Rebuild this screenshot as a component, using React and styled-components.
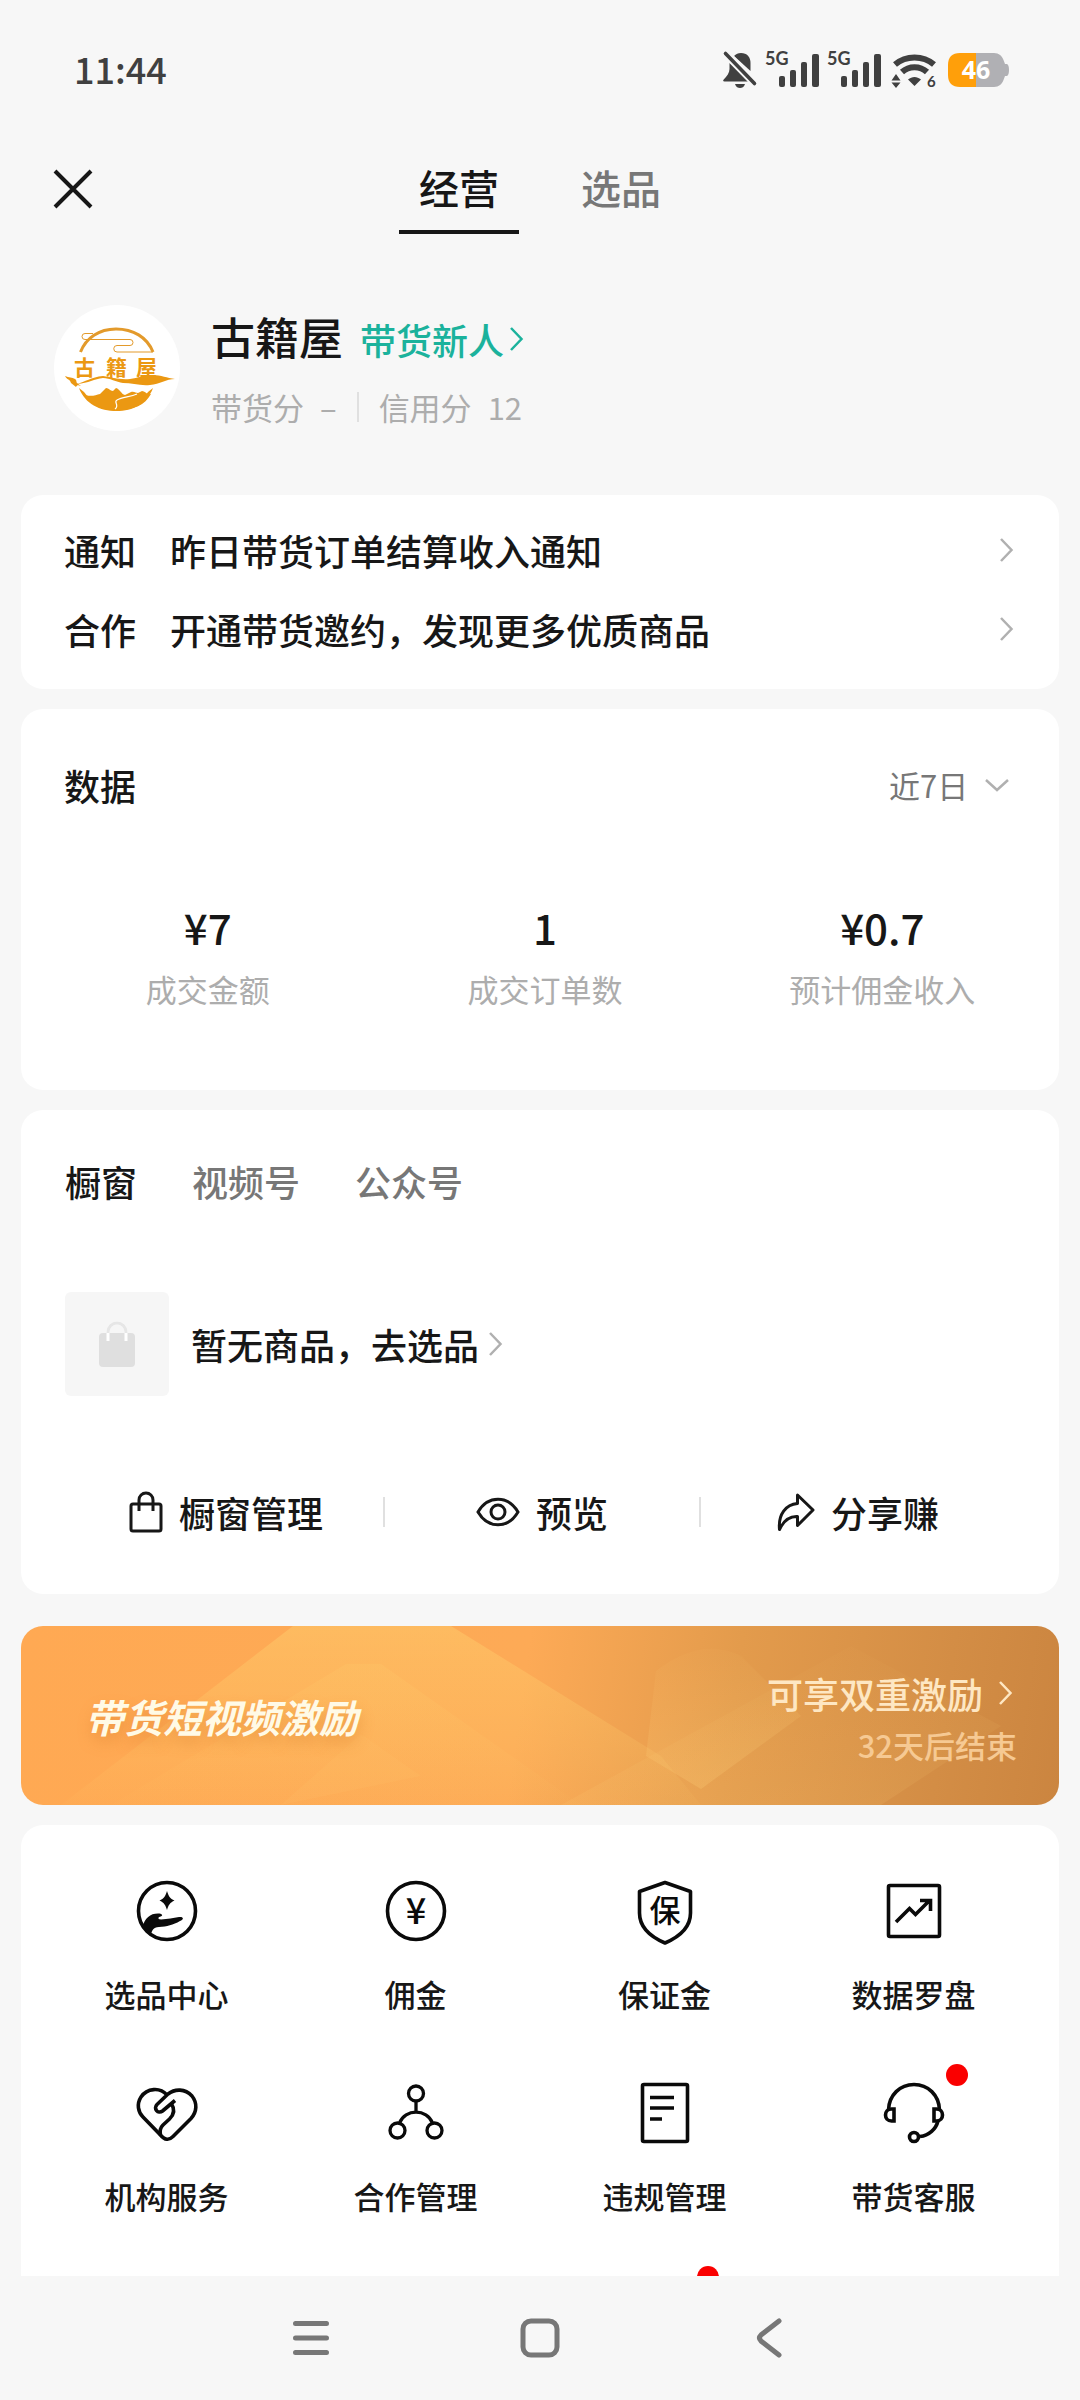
import React, { useState } from "react";
import styled, { createGlobalStyle } from "styled-components";

const ink = "#171717";
const grey = "#777777";
const pale = "#adadad";

const GlobalStyle = createGlobalStyle`
  *, *::before, *::after { box-sizing: border-box; }
  body {
    margin: 0;
    background: #f7f7f7;
    color: ${ink};
    font-family: "Noto Sans CJK SC", "Noto Sans", sans-serif;
  }
  button, select {
    margin: 0;
    padding: 0;
    border: 0;
    background: none;
    color: inherit;
    font: inherit;
    cursor: pointer;
  }
  a { color: inherit; text-decoration: none; }
  svg { display: block; flex: none; overflow: visible; }
  h1, h2, p, dl, dt, dd { margin: 0; font-weight: inherit; }
`;

const Screen = styled.div`
  display: flex;
  flex-direction: column;
  height: 100vh;
`;

const StatusBar = styled.div`
  display: flex;
  flex: none;
  align-items: center;
  justify-content: space-between;
  height: 140px;
  padding: 0 71px 0 74px;
  color: #404040;
`;

const Clock = styled.time`
  padding-bottom: 4px;
  font-size: 36px;
  font-weight: 500;
  line-height: 40px;
`;

const StatusIcons = styled.div`
  display: flex;
  align-items: center;
  gap: 8px;
`;

const Header = styled.header`
  display: grid;
  flex: none;
  grid-template-columns: 1fr auto 1fr;
  align-items: center;
  height: 94px;
  padding: 4px 53px 0;
`;

const IconButton = styled.button`
  display: grid;
  place-items: center;
  width: 40px;
  height: 40px;
`;

const HeaderTabs = styled.nav`
  display: flex;
  gap: 42px;
  height: 90px;
`;

const HeaderTab = styled.button`
  width: 120px;
  border-bottom: 4px solid ${(p) => (p.$active ? ink : "transparent")};
  color: ${(p) => (p.$active ? ink : grey)};
  font-size: 40px;
  font-weight: 500;
  line-height: 60px;
`;

const Content = styled.main`
  flex: 1;
  min-height: 0;
  overflow-y: auto;
  scrollbar-width: none;
  padding: 0 21px;
`;

const Profile = styled.section`
  display: flex;
  align-items: center;
  gap: 30px;
  padding: 70px 32px 63px;
`;

const ProfileText = styled.div`
  display: flex;
  flex-direction: column;
  gap: 18px;
  padding-bottom: 4px;
`;

const NameLine = styled.div`
  display: flex;
  align-items: baseline;
  gap: 17px;
  line-height: 60px;
`;

const ShopName = styled.h1`
  font-size: 44px;
  font-weight: 500;
`;

const Level = styled.a`
  display: flex;
  align-items: center;
  gap: 6px;
  color: #1bb29c;
  font-size: 36px;
  font-weight: 500;
`;

const Scores = styled.div`
  display: flex;
  align-items: center;
  gap: 20px;
  color: ${pale};
  font-size: 31px;
  line-height: 40px;
`;

const Score = styled.span`
  display: flex;
  gap: 16px;
`;

const Divider = styled.span`
  width: 2px;
  height: 30px;
  background: #e0e0e0;
`;

const Card = styled.section`
  margin-bottom: ${(p) => p.$gap || 20}px;
  padding: ${(p) => p.$pad};
  border-radius: 22px;
  background: #ffffff;
`;

const Notice = styled.a`
  display: flex;
  align-items: center;
  gap: 34px;
  height: 79px;
  font-size: 36px;
  font-weight: 500;
  line-height: 52px;
`;

const NoticeText = styled.span`
  flex: 1;
`;

const CardHead = styled.div`
  display: flex;
  align-items: center;
  justify-content: space-between;
  height: 52px;
  padding: 0 50px 0 43px;
`;

const CardTitle = styled.h2`
  font-size: 36px;
  font-weight: 500;
  line-height: 52px;
`;

const Period = styled.label`
  display: flex;
  align-items: center;
  gap: 16px;
  color: ${grey};
  font-size: 31px;
  line-height: 40px;
`;

const PeriodSelect = styled.select`
  appearance: none;
  height: 46px;
`;

const Stats = styled.dl`
  display: grid;
  grid-template-columns: repeat(3, 1fr);
  padding: 86px 8px 0 18px;
  text-align: center;
`;

const Stat = styled.div`
  display: flex;
  flex-direction: column-reverse;
  gap: 12px;
`;

const StatLabel = styled.dt`
  color: ${pale};
  font-size: 31px;
  line-height: 40px;
`;

const StatValue = styled.dd`
  font-size: 42px;
  font-weight: 500;
  line-height: 60px;
`;

const ShopTabs = styled.div`
  display: flex;
  gap: 55px;
  font-size: 36px;
  font-weight: 500;
  line-height: 52px;
`;

const ShopTab = styled.button`
  color: ${(p) => (p.$active ? ink : grey)};
`;

const EmptyGoods = styled.a`
  display: flex;
  align-items: center;
  gap: 22px;
  margin-top: 85px;
  font-size: 36px;
  font-weight: 500;
  line-height: 52px;
`;

const Thumb = styled.span`
  display: grid;
  place-items: center;
  width: 104px;
  height: 104px;
  border-radius: 6px;
  background: #f6f6f6;
`;

const LinkText = styled.span`
  display: flex;
  align-items: center;
  gap: 10px;
`;

const Actions = styled.div`
  display: flex;
  align-items: center;
  margin-top: 90px;
  padding-left: 4px;
`;

const Action = styled.button`
  display: flex;
  flex: 1;
  align-items: center;
  justify-content: center;
  gap: 16px;
  font-size: 36px;
  font-weight: 500;
  line-height: 52px;
`;

const Banner = styled.a`
  position: relative;
  display: flex;
  align-items: center;
  justify-content: space-between;
  height: 179px;
  margin-bottom: 20px;
  padding: 0 42px 0 64px;
  overflow: hidden;
  border-radius: 22px;
  background: linear-gradient(98deg, #ffa953 0%, #fdaa56 48%, #e39b4c 68%, #d38d45 88%, #cb8540 100%);
`;

const BannerArt = styled.svg`
  position: absolute;
  inset: 0;
  width: 100%;
  height: 100%;
`;

const BannerTitle = styled.span`
  position: relative;
  color: #fffae6;
  font-size: 39px;
  font-style: italic;
  font-weight: 700;
  line-height: 52px;
  text-shadow: 0 8px 14px rgba(214, 122, 40, 0.4);
`;

const BannerSide = styled.span`
  position: relative;
  display: flex;
  flex-direction: column;
  align-items: flex-end;
  gap: 6px;
`;

const BannerOffer = styled.span`
  display: flex;
  align-items: center;
  gap: 16px;
  padding-right: 4px;
  color: #fee7c3;
  font-size: 36px;
  font-weight: 500;
  line-height: 52px;
`;

const BannerNote = styled.span`
  color: #f6c993;
  font-size: 31px;
  font-weight: 500;
  line-height: 40px;
`;

const Tools = styled.section`
  display: grid;
  grid-template-columns: repeat(4, 1fr);
  row-gap: 67px;
  padding: 54px 21px;
  border-radius: 22px 22px 0 0;
  background: #ffffff;
`;

const Tool = styled.button`
  display: flex;
  flex-direction: column;
  align-items: center;
  gap: 31px;
  min-height: 135px;
  font-size: 31px;
  font-weight: 500;
  line-height: 40px;
`;

const ToolIcon = styled.span`
  position: relative;
  width: 64px;
  height: 64px;
`;

const Dot = styled.span`
  position: absolute;
  top: -17px;
  right: -22px;
  width: 22px;
  height: 22px;
  border-radius: 50%;
  background: #fa0000;
`;

const SystemNav = styled.nav`
  display: flex;
  flex: none;
  align-items: center;
  justify-content: center;
  gap: 189px;
  height: 124px;
  background: #f7f7f7;
`;

function Chevron({ color = "#b0b0b0" }) {
  return (
    <svg width="14" height="24" viewBox="0 0 14 24" fill="none" stroke={color} strokeWidth="2.5">
      <path d="M1 1 11.500 12 1 23" />
    </svg>
  );
}

function BellOff() {
  return (
    <svg width="34" height="40" viewBox="0 0 34 40" fill="#404040">
      <path d="M11 6C13 4 15 3 18 3c6 0 9.500 4 9.500 10v8Z" />
      <path d="M6.500 13 25 31.500H1.500c-1.500 0-1.700-1-.8-2C4 26 6.500 23 6.500 19Z" />
      <path d="M12 34h10c-1 3-3 4-5 4s-4-1-5-4Z" />
      <path d="m3 3.500 29 30" stroke="#f7f7f7" strokeWidth="8" />
      <path d="m2.500 3.500 29 30" stroke="#404040" strokeWidth="3.600" strokeLinecap="round" />
    </svg>
  );
}

function Signal() {
  return (
    <svg width="54" height="46" viewBox="0 -5 54 46" fill="#404040">
      <text x="0" y="13" fontSize="18" fontWeight="700" fontFamily="Lato, sans-serif">5G</text>
      <rect x="14" y="24" width="6" height="11" rx="2" />
      <rect x="25" y="18" width="6" height="17" rx="2" />
      <rect x="36" y="10" width="6" height="25" rx="2" />
      <rect x="47" y="2" width="7" height="33" rx="2" />
    </svg>
  );
}

function Wifi() {
  return (
    <svg width="51" height="46" viewBox="0 -5 51 46" fill="none" stroke="#404040">
      <path d="M6 12.500C17 3 34 3 45 12.500" strokeWidth="6" />
      <path d="M13 20c7-6.500 18-6.500 25 0" strokeWidth="6" />
      <path d="M19 27.500c4-3.500 9-3.500 13 0L25.500 34Z" fill="#404040" stroke="none" />
      <path d="m7 22 4.500 6.500h-9ZM7 36l4.500-5.500h-9Z" fill="#404040" stroke="none" />
      <text x="38" y="35" fontSize="15" fontWeight="700" fill="#404040" stroke="none" fontFamily="Lato, sans-serif">6</text>
    </svg>
  );
}

function Battery() {
  return (
    <svg width="61" height="34" viewBox="0 0 61 34">
      <path d="M28 0h18c5 0 8 3 9.500 7l1.500 4h2q2 1 2 6t-2 6h-2l-1.500 4c-1.500 4-4.500 7-9.500 7H28Z" fill="#b0b0b4" />
      <path d="M28 0H12C4 0 0 4 0 12v10c0 8 4 12 12 12h16Z" fill="#ff9f0a" />
      <text x="28" y="26" textAnchor="middle" fontSize="25" fontWeight="700" fill="#fff" fontFamily="'Noto Sans', sans-serif">46</text>
    </svg>
  );
}

function Logo() {
  return (
    <svg width="128" height="128" viewBox="0 0 128 128" role="img" aria-label="古籍屋">
      <circle cx="64" cy="64" r="63" fill="#fff" />
      <g fill="none" stroke="#e39a2b">
        <path d="M27.500 48C33 34 46 25 63 25s31 8 37 23" strokeWidth="3" />
        <path d="M40 29.500H32a3 3 0 0 0 0 6H77a3 3 0 0 1 0 6H64a3 3 0 0 0 0 6.500h36" strokeWidth="1" />
      </g>
      <g fill="#eb9812">
        <text x="21 53 83" y="71" fontSize="21" fontWeight="700">古籍屋</text>
        <path d="M12 72c4 2 7 1 10 3 2 1 1 3 2 4l4 3c-3-1-4-1-5 1l-5-4c-1-4-4-3-6-7Z" />
        <path d="M24 80c8-2 14-7 26-8 9 1 16 4 27 3 8-1 14-4 23-4 8 0 14 3 22 4-9 0-15 5-25 6s-18-2-27-2c-7-1-13-5-20-5-9 1-14 5-26 6Z" />
        <path d="M26 84 31 88C40 100 51 104.500 63.500 104.500S87 100 95 88l5-4c-6 16-20 23-36.500 23S32 100 26 84Z" />
        <path d="M33 91c5 2 10 0 14-1l6-6c3 0 4 3 7 3l3-3c4 1 5 6 9 7l6-3c3-1 5 1 7 1l4-2c3 0 5 4 9 3-6 11-17 16-34.500 16S39 101 33 91Z" />
      </g>
      <path d="M84 90c-7 3-15 3-20 6-4 2 3 5-2 9" fill="none" stroke="#fff" strokeWidth="1.200" />
    </svg>
  );
}

const stroke = { fill: "none", stroke: ink, strokeWidth: 3 };

const BagIcon = () => (
  <svg width="34" height="42" viewBox="0 0 34 42" {...stroke}>
    <rect x="2" y="13" width="30" height="27" rx="2" />
    <path d="M10 20V9a7 7 0 0 1 14 0v11" />
  </svg>
);

const EyeIcon = () => (
  <svg width="44" height="30" viewBox="0 0 44 30" {...stroke}>
    <path d="M2 15C12-2 32-2 42 15 32 32 12 32 2 15Z" />
    <circle cx="22" cy="15" r="7" />
  </svg>
);

const ShareIcon = () => (
  <svg width="38" height="40" viewBox="0 0 38 40" {...stroke} strokeLinejoin="round">
    <path d="M20.500 3 36 18 20.500 33.500V24.500C12 24 6.500 29 2.500 37.500 1 22 9 12.500 20.500 11.500Z" />
  </svg>
);

const SoftBag = () => (
  <svg width="36" height="46" viewBox="0 0 36 46">
    <rect x="0" y="12" width="36" height="34" rx="4" fill="#dfdfdf" />
    <path d="M9 20v-9a9 9 0 0 1 18 0v9" fill="none" stroke="#fff" strokeWidth="3" />
    <path d="M9 12v-1a9 9 0 0 1 18 0v1" fill="none" stroke="#e6e6e6" strokeWidth="3" />
  </svg>
);

const toolStroke = { width: 64, height: 64, viewBox: "0 0 64 64", fill: "none", stroke: "#0a0a0a", strokeWidth: 3.6 };

const tools = [
  {
    label: "选品中心",
    icon: (
      <svg {...toolStroke}>
        <circle cx="32" cy="32" r="28.500" />
        <path d="M32 12c1.500 5 3 7.500 7.500 9.500C35 23.500 33.500 26 32 31c-1.500-5-3-7.500-7.500-9.500C29 19.500 30.500 17 32 12Z" fill="#0a0a0a" stroke="none" />
        <path d="M7.500 48C10 39 15 34.500 23 34.500c4 0 6 2.300 2 3.300-2.500.7-2 2.700 1 2.700 7-.3 12-1.500 18-2.500 5-.5 5 2.500 1 4-7 4-13 5.500-21 6-6 .5-7 3-8.500 9Z" fill="#0a0a0a" stroke="none" />
      </svg>
    ),
  },
  {
    label: "佣金",
    icon: (
      <svg {...toolStroke}>
        <circle cx="32" cy="32" r="28.500" />
        <text x="32" y="45" textAnchor="middle" fontSize="36" fontWeight="500" fill="#0a0a0a" stroke="none">¥</text>
      </svg>
    ),
  },
  {
    label: "保证金",
    icon: (
      <svg {...toolStroke} strokeLinejoin="round">
        <path d="M32 3.500 57.500 12.500V34C57.500 48 46 58 32 64 18 58 6.500 48 6.500 34V12.500Z" />
        <text x="32" y="43" textAnchor="middle" fontSize="31" fontWeight="500" fill="#0a0a0a" stroke="none">保</text>
      </svg>
    ),
  },
  {
    label: "数据罗盘",
    icon: (
      <svg {...toolStroke}>
        <rect x="6.500" y="6.500" width="51" height="51" rx="1.500" />
        <path d="m14 43 13.500-13.500 6 6L48 21M38 21.500h10.500V32" />
      </svg>
    ),
  },
  {
    label: "机构服务",
    icon: (
      <svg {...toolStroke} strokeLinejoin="round">
        <path d="M32 14C25 6 12 7 6 16 1.500 23 3 31 8 36L25 53.500c5 6 9 6 13 2L56 37.500C62 31 62.500 22 57 15 50 7.500 40 7.500 33 13L22 23.500c-4 4 1 10 5.500 6.500L40 19.500" />
        <path d="M36.500 23c4 6 2 11-2 15L28 44c-3 3-3.500 6-2.500 10" />
      </svg>
    ),
  },
  {
    label: "合作管理",
    icon: (
      <svg {...toolStroke} strokeWidth="3.300">
        <circle cx="32" cy="12.500" r="7.500" />
        <circle cx="13.500" cy="49.500" r="7.500" />
        <circle cx="50.500" cy="49.500" r="7.500" />
        <path d="M32 20v11M15.500 42C21 27.500 43 27.500 48.500 42" />
      </svg>
    ),
  },
  {
    label: "违规管理",
    icon: (
      <svg {...toolStroke}>
        <rect x="9.500" y="3.500" width="45" height="57" rx="1.500" />
        <path d="M17 16.500h24M17 27h24M17 38h12" />
      </svg>
    ),
  },
  {
    label: "带货客服",
    dot: true,
    icon: (
      <svg {...toolStroke}>
        <path d="M6.500 29C7 14 18 3.500 32 3.500S57 14 57.500 29" />
        <path d="M12 28v12H9.500C1.500 40 1.500 28 9.500 28ZM52 28v12h2.500c8 0 8-12 0-12Z" />
        <path d="M56 40c-2 8-9 14.500-18 15.500" />
        <circle cx="32" cy="56" r="4.500" />
      </svg>
    ),
  },
  {},
  {},
  { dot: true },
];

const stats = [
  ["成交金额", "¥7"],
  ["成交订单数", "1"],
  ["预计佣金收入", "¥0.7"],
];

export default function App() {
  const [page, setPage] = useState("经营");
  const [shopTab, setShopTab] = useState("橱窗");

  return (
    <Screen>
      <GlobalStyle />
      <StatusBar>
        <Clock>11:44</Clock>
        <StatusIcons>
          <BellOff />
          <Signal />
          <Signal />
          <Wifi />
          <Battery />
        </StatusIcons>
      </StatusBar>

      <Header>
        <IconButton aria-label="关闭">
          <svg width="40" height="40" viewBox="0 0 40 40" stroke={ink} strokeWidth="4">
            <path d="m2 2 36 36M38 2 2 38" />
          </svg>
        </IconButton>
        <HeaderTabs>
          {["经营", "选品"].map((name) => (
            <HeaderTab key={name} $active={name === page} onClick={() => setPage(name)}>
              {name}
            </HeaderTab>
          ))}
        </HeaderTabs>
      </Header>

      <Content>
        <Profile>
          <Logo />
          <ProfileText>
            <NameLine>
              <ShopName>古籍屋</ShopName>
              <Level href="#level">
                带货新人
                <Chevron color="#1bb29c" />
              </Level>
            </NameLine>
            <Scores>
              <Score>
                <span>带货分</span>
                <span>–</span>
              </Score>
              <Divider />
              <Score>
                <span>信用分</span>
                <span>12</span>
              </Score>
            </Scores>
          </ProfileText>
        </Profile>

        <Card $pad="15px 45px 21px 43px">
          <Notice href="#notice">
            <span>通知</span>
            <NoticeText>昨日带货订单结算收入通知</NoticeText>
            <Chevron />
          </Notice>
          <Notice href="#cooperate">
            <span>合作</span>
            <NoticeText>开通带货邀约，发现更多优质商品</NoticeText>
            <Chevron />
          </Notice>
        </Card>

        <Card $pad="50px 0 81px">
          <CardHead>
            <CardTitle>数据</CardTitle>
            <Period>
              <PeriodSelect aria-label="时间范围" defaultValue="7">
                <option value="7">近7日</option>
              </PeriodSelect>
              <svg width="24" height="14" viewBox="0 0 24 14" fill="none" stroke="#b0b0b0" strokeWidth="2.500">
                <path d="m1 2 11 10L23 2" />
              </svg>
            </Period>
          </CardHead>
          <Stats>
            {stats.map(([label, value]) => (
              <Stat key={label}>
                <StatLabel>{label}</StatLabel>
                <StatValue>{value}</StatValue>
              </Stat>
            ))}
          </Stats>
        </Card>

        <Card $pad="45px 44px 56px" $gap={32}>
          <ShopTabs>
            {["橱窗", "视频号", "公众号"].map((name) => (
              <ShopTab key={name} $active={name === shopTab} onClick={() => setShopTab(name)}>
                {name}
              </ShopTab>
            ))}
          </ShopTabs>
          <EmptyGoods href="#pick">
            <Thumb>
              <SoftBag />
            </Thumb>
            <LinkText>
              暂无商品，去选品
              <Chevron />
            </LinkText>
          </EmptyGoods>
          <Actions>
            <Action>
              <BagIcon />
              橱窗管理
            </Action>
            <Divider />
            <Action>
              <EyeIcon />
              预览
            </Action>
            <Divider />
            <Action>
              <ShareIcon />
              分享赚
            </Action>
          </Actions>
        </Card>

        <Banner href="#bonus">
          <BannerArt viewBox="0 0 1038 179" preserveAspectRatio="none" aria-hidden="true">
            <defs>
              <linearGradient id="facet" x1="0" y1="0" x2="0" y2="1">
                <stop offset="0" stopColor="#ffd06e" stopOpacity="0.45" />
                <stop offset="1" stopColor="#ffd06e" stopOpacity="0.05" />
              </linearGradient>
              <linearGradient id="gem" x1="0" y1="0" x2="0" y2="1">
                <stop offset="0" stopColor="#ffd27a" stopOpacity="0.05" />
                <stop offset="1" stopColor="#ffd27a" stopOpacity="0.3" />
              </linearGradient>
            </defs>
            <path d="M272 0H430L640 130 680 179H40Z" fill="url(#facet)" />
            <path d="M325 38H360L560 179H90Z" fill="url(#facet)" opacity="0.4" />
            <path d="M340 108 400 150 260 179Z" fill="#ffd27a" opacity="0.1" />
            <path d="M635 45Q680 10 720 30L780 90 680 163 625 130Z" fill="url(#gem)" opacity="0.8" />
            <path d="M540 179 830 20 980 100 860 179Z" fill="url(#gem)" opacity="0.4" />
          </BannerArt>
          <BannerTitle>带货短视频激励</BannerTitle>
          <BannerSide>
            <BannerOffer>
              可享双重激励
              <Chevron color="#fee7c3" />
            </BannerOffer>
            <BannerNote>32天后结束</BannerNote>
          </BannerSide>
        </Banner>

        <Tools>
          {tools.map((tool, i) => (
            <Tool key={i}>
              <ToolIcon>
                {tool.icon}
                {tool.dot && <Dot />}
              </ToolIcon>
              {tool.label}
            </Tool>
          ))}
        </Tools>
      </Content>

      <SystemNav>
        <IconButton aria-label="菜单">
          <svg width="40" height="40" viewBox="0 0 40 40" stroke={grey} strokeWidth="5" strokeLinecap="round">
            <path d="M4.500 5.500h31M4.500 20h31M4.500 34.500h31" />
          </svg>
        </IconButton>
        <IconButton aria-label="主页">
          <svg width="40" height="40" viewBox="0 0 40 40" fill="none" stroke={grey} strokeWidth="5">
            <rect x="3" y="3" width="34" height="34" rx="8" />
          </svg>
        </IconButton>
        <IconButton aria-label="返回">
          <svg width="40" height="40" viewBox="0 0 40 40" fill="none" stroke={grey} strokeWidth="5" strokeLinecap="round">
            <path d="M30 3 12 17q-3 3 0 6L30 37" />
          </svg>
        </IconButton>
      </SystemNav>
    </Screen>
  );
}
